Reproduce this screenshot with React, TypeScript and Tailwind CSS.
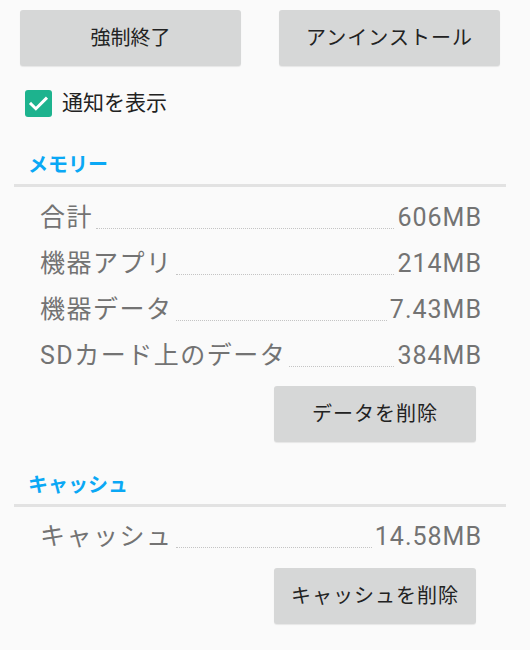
import React from "react";

const font = { fontFamily: "Roboto, 'Noto Sans CJK JP', sans-serif" };

function GrayButton({ label, className = "" }: { label: string; className?: string }) {
  return (
    <button
      className={`h-[56px] rounded-[3px] bg-[#d6d7d7] text-[20px] text-[#222] shadow-[0_1px_1px_rgba(0,0,0,0.08)] ${className}`}
    >
      {label}
    </button>
  );
}

function Row({ label, value }: { label: string; value: string }) {
  return (
    <div className="flex h-[46px] items-center text-[25px] leading-none text-[#737373]">
      <span className="tracking-[1.5px]">{label}</span>
      <span className="mx-[3px] flex-1 self-end mb-[11px] border-b border-dotted border-[#c4c4c4]" />
      <span className="tracking-[1px]">{value}</span>
    </div>
  );
}

function Section({ title }: { title: string }) {
  return (
    <>
      <div className="pl-[28px] text-[20px] font-semibold leading-[30px] text-[#0aa8f5]">{title}</div>
      <div className="ml-[14px] mr-[24px] mt-[4px] border-t-[3px] border-[#e2e2e2]" />
    </>
  );
}

export default function App() {
  const memory = [
    { label: "合計", value: "606MB" },
    { label: "機器アプリ", value: "214MB" },
    { label: "機器データ", value: "7.43MB" },
    { label: "SDカード上のデータ", value: "384MB" },
  ];

  return (
    <div className="h-[650px] w-[530px] overflow-hidden bg-[#fafafa] pt-[10px]" style={font}>
      <div className="flex gap-[38px] pl-[20px] pr-[30px]">
        <GrayButton label="強制終了" className="flex-1" />
        <GrayButton label="アンインストール" className="flex-1 tracking-[1px]" />
      </div>

      <div className="mt-[24px] flex h-[27px] items-center gap-[10px] pl-[25px]">
        <div className="flex h-[27px] w-[27px] items-center justify-center rounded-[3px] bg-[#1db38e]">
          <svg width="21" height="21" viewBox="0 0 24 24" fill="none">
            <path d="M3.5 12.5l5.5 5.5L20.5 6.5" stroke="white" strokeWidth="3.4" strokeLinecap="square" />
          </svg>
        </div>
        <span className="text-[21px] text-[#222]">通知を表示</span>
      </div>

      <div className="mt-[33px]">
        <Section title="メモリー" />
      </div>
      <div className="mt-[7px] pl-[40px] pr-[48px]">
        {memory.map((m) => (
          <Row key={m.label} label={m.label} value={m.value} />
        ))}
      </div>
      <div className="mt-[8px] flex justify-end pr-[54px]">
        <GrayButton label="データを削除" className="w-[202px] tracking-[1px]" />
      </div>

      <div className="mt-[28px]">
        <Section title="キャッシュ" />
      </div>
      <div className="mt-[6px] pl-[40px] pr-[48px]">
        <Row label="キャッシュ" value="14.58MB" />
      </div>
      <div className="mt-[9px] flex justify-end pr-[54px]">
        <GrayButton label="キャッシュを削除" className="w-[202px] tracking-[1px]" />
      </div>
    </div>
  );
}
